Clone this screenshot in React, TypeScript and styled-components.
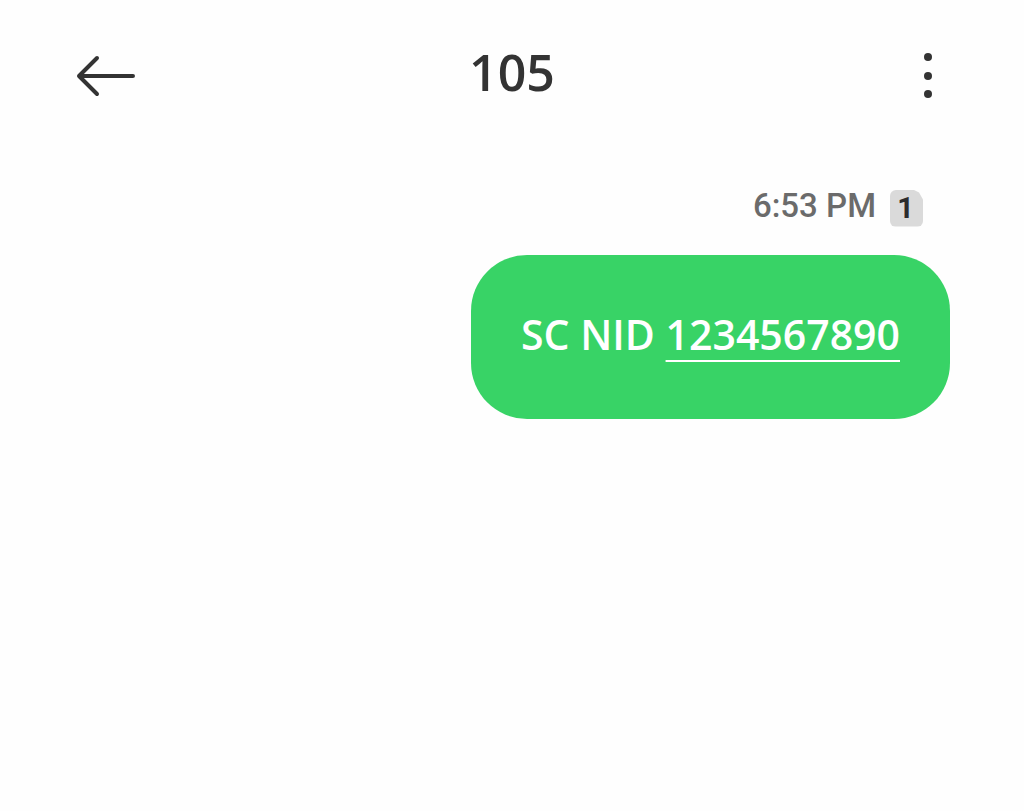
import React from "react";
import styled, { createGlobalStyle } from "styled-components";

const GlobalStyle = createGlobalStyle`
  * {
    box-sizing: border-box;
  }
  body {
    margin: 0;
    background: #fefefe;
    font-family: "Open Sans", Roboto, sans-serif;
    font-weight: 600;
  }
`;

const Screen = styled.div`
  min-height: 100vh;
  display: flex;
  flex-direction: column;
`;

const Header = styled.header`
  display: grid;
  grid-template-columns: 92px 1fr 92px;
  align-items: center;
  padding: 44px 60px 0;
`;

const Title = styled.h1`
  margin: 0 0 8px;
  font-size: 50px;
  line-height: 56px;
  font-weight: 600;
  text-align: center;
  color: #333;
`;

const IconButton = styled.button<{ $end?: boolean }>`
  display: flex;
  justify-content: ${(p) => (p.$end ? "flex-end" : "flex-start")};
  padding: ${(p) => (p.$end ? "0 32px" : "0 16px")};
  height: 64px;
  align-items: center;
  border: 0;
  background: none;
  color: #333;
  cursor: pointer;

  svg {
    flex: none;
  }
`;

const Thread = styled.main`
  display: flex;
  flex-direction: column;
  align-items: flex-end;
  padding: 78px 74px 48px;
`;

const Meta = styled.div`
  display: flex;
  align-items: center;
  gap: 14px;
  margin-right: 27px;
  color: #6b6b6b;
  font-family: Roboto, sans-serif;
`;

const Time = styled.time`
  margin-bottom: 4px;
  font-size: 33px;
  line-height: 40px;
  font-weight: 500;
`;

const SimBadge = styled.span`
  width: 33px;
  height: 37px;
  padding-right: 2px;
  display: flex;
  align-items: center;
  justify-content: center;
  border-radius: 6px;
  background: #dadada;
  clip-path: polygon(0 0, 70% 0, 88% 8%, 100% 27%, 100% 100%, 0 100%);
  color: #2c2c2c;
  font-size: 29px;
  font-weight: 700;
`;

const Bubble = styled.p`
  margin: 25px 0 0;
  padding: 51px 50px 57px;
  border-radius: 56px;
  background: #38d366;
  color: #fff;
  font-size: 41px;
  line-height: 56px;
`;

const NumberLink = styled.a`
  color: inherit;
  text-decoration: underline;
  text-decoration-thickness: 2px;
  text-underline-offset: 10px;
`;

export default function App() {
  return (
    <Screen>
      <GlobalStyle />
      <Header>
        <IconButton aria-label="Back">
          <svg width="60" height="44" viewBox="0 0 60 44" fill="none" stroke="currentColor" strokeWidth="4" strokeLinecap="round" strokeLinejoin="round">
            <path d="M57 22H3M21 4L3 22L21 40" />
          </svg>
        </IconButton>
        <Title>105</Title>
        <IconButton $end aria-label="More options">
          <svg width="8" height="48" viewBox="0 0 8 48" fill="currentColor">
            <circle cx="4" cy="5" r="4" />
            <circle cx="4" cy="24" r="4" />
            <circle cx="4" cy="42" r="4" />
          </svg>
        </IconButton>
      </Header>
      <Thread>
        <Meta>
          <Time dateTime="18:53">6:53 PM</Time>
          <SimBadge aria-label="SIM 1">1</SimBadge>
        </Meta>
        <Bubble>
          SC NID <NumberLink href="tel:1234567890">1234567890</NumberLink>
        </Bubble>
      </Thread>
    </Screen>
  );
}
